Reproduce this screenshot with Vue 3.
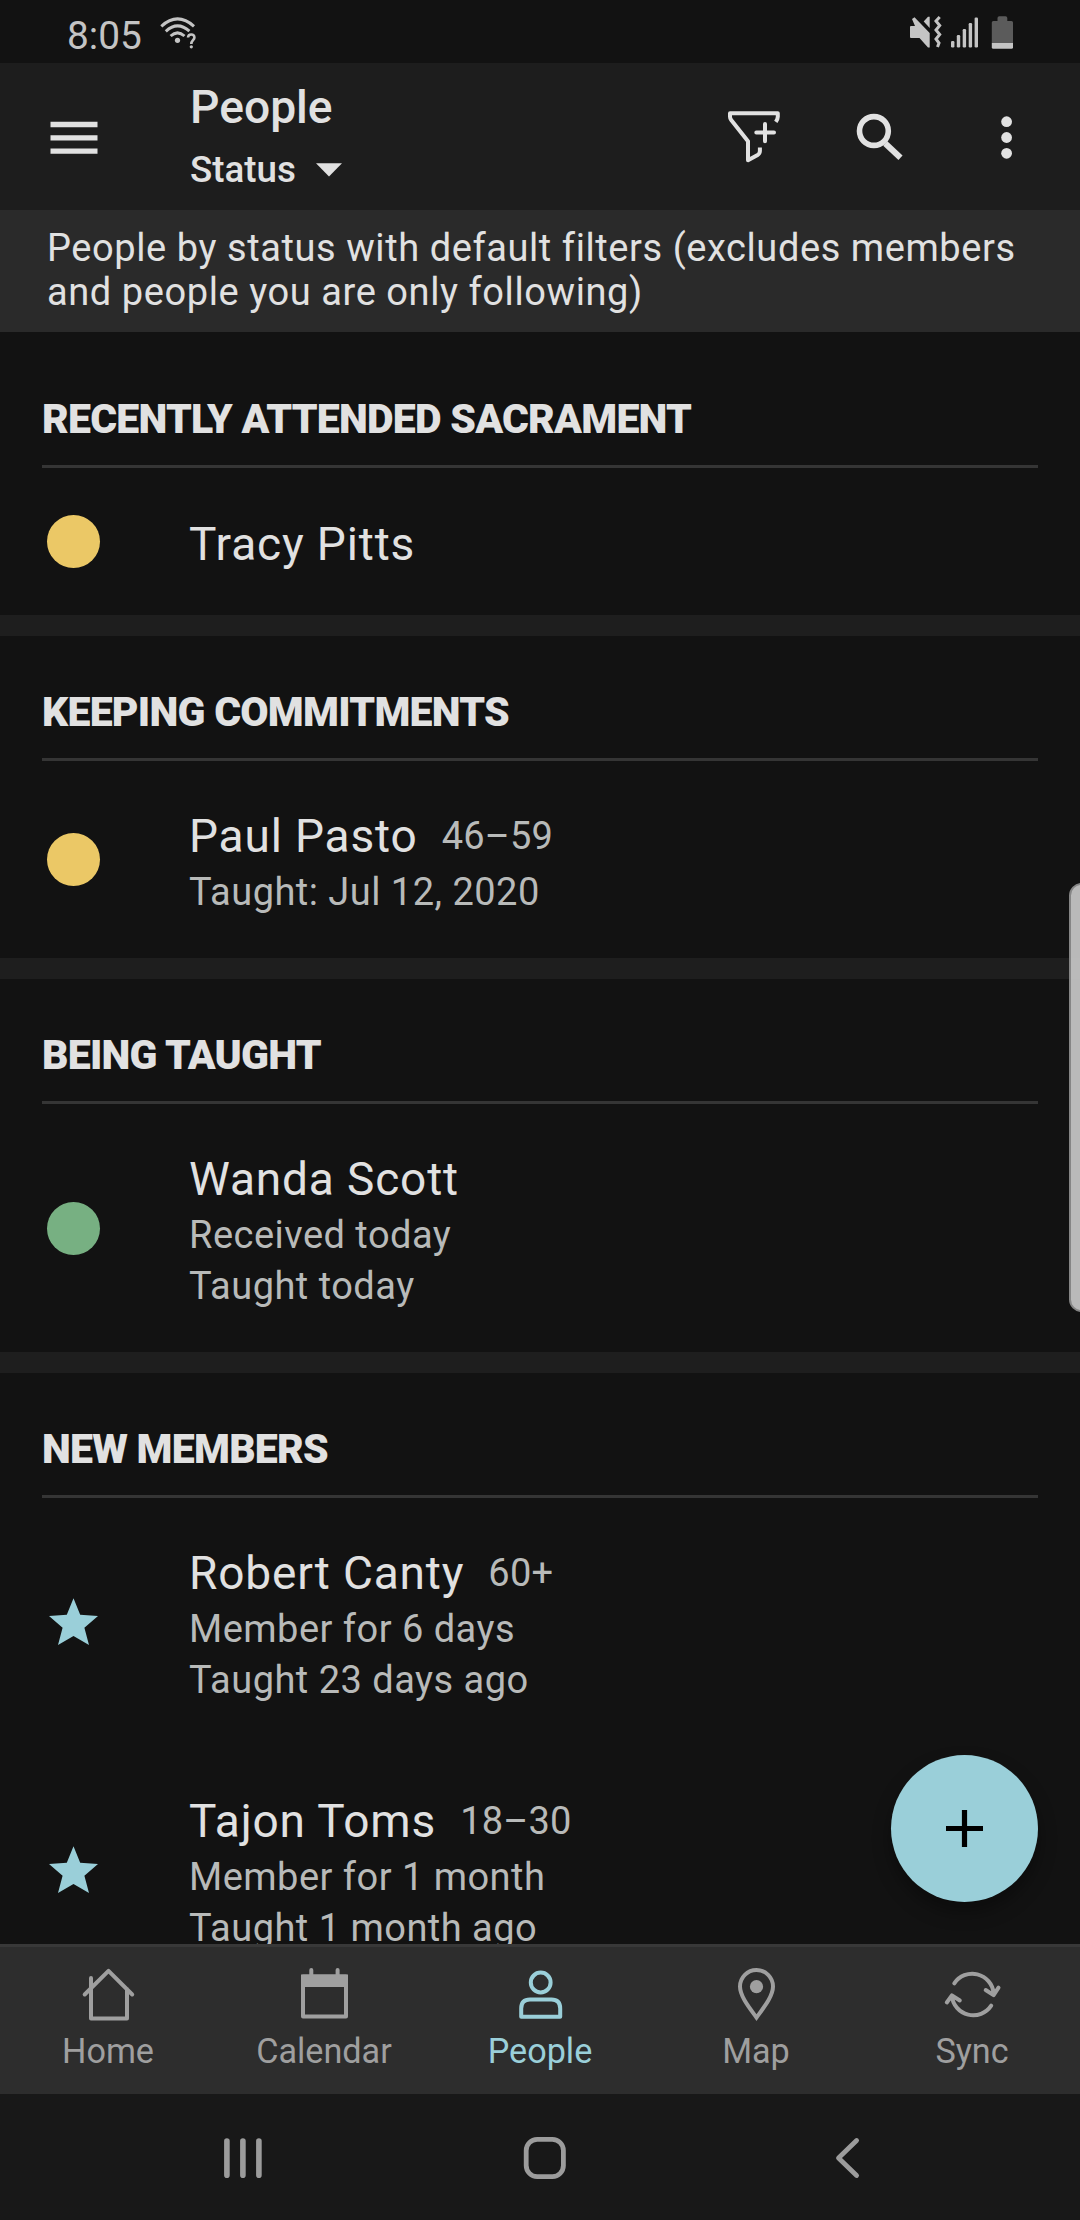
<script setup>
const sections = [
  { title: 'RECENTLY ATTENDED SACRAMENT', people: [{ name: 'Tracy Pitts', mark: 'yellow', lines: [] }] },
  {
    title: 'KEEPING COMMITMENTS',
    people: [{ name: 'Paul Pasto', age: '46–59', mark: 'yellow', lines: ['Taught: Jul 12, 2020'] }],
  },
  {
    title: 'BEING TAUGHT',
    people: [{ name: 'Wanda Scott', mark: 'green', lines: ['Received today', 'Taught today'] }],
  },
  {
    title: 'NEW MEMBERS',
    people: [
      { name: 'Robert Canty', age: '60+', mark: 'star', lines: ['Member for 6 days', 'Taught 23 days ago'] },
      { name: 'Tajon Toms', age: '18–30', mark: 'star', lines: ['Member for 1 month', 'Taught 1 month ago'] },
    ],
  },
]
const tabs = ['Home', 'Calendar', 'People', 'Map', 'Sync']
</script>

<template>
  <div class="screen">
    <header class="status">
      <span class="time">8:05</span>
      <svg class="wifi" width="40" height="36" viewBox="158 14 40 36" fill="none" stroke="#c4c4c4" stroke-width="3">
        <path d="M161.3 26.3Q177.500 11.500 194 26.300M165.800 31.300Q177.500 20.500 189.400 31.200M170.600 36Q177.500 29.800 184.500 36" />
        <circle cx="177.500" cy="40.300" r="2.600" fill="#c4c4c4" stroke="none" />
        <path d="M188 37.500C188.300 33.300 194.600 33.500 194.400 37.600C194.200 40.200 191.300 40.300 191.300 44" stroke-width="2.600" />
        <circle cx="191.300" cy="46.800" r="1.600" fill="#c4c4c4" stroke="none" />
      </svg>
      <svg class="indicators" width="110" height="40" viewBox="906 13 110 40" fill="#c4c4c4">
        <path d="M911 26H915L912 19L914.500 17.300L929.700 33V47.500H928L919.500 38H911Q910 38 910 37V27Q910 26 911 26Z" />
        <path d="M923.700 21.500L928 16.800H929.700V28Z" />
        <path d="M939.700 17L936 21L939.700 25.500L936 30L939.700 34.500L936 39L939 43L937.500 47" fill="none" stroke="#c4c4c4" stroke-width="3" />
        <rect x="951" y="41" width="3.400" height="6.500" rx="1.200" />
        <rect x="956.800" y="35" width="3.400" height="12.500" rx="1.200" />
        <rect x="962.700" y="29" width="3.400" height="18.500" rx="1.200" />
        <rect x="968.700" y="23" width="3.400" height="24.500" rx="1.200" />
        <rect x="974.600" y="17.500" width="3.400" height="30" rx="1.200" />
        <path d="M997.500 21V18Q997.500 16.300 999.300 16.300H1005.500Q1007.300 16.300 1007.300 18V21H1011.500Q1013 21 1013 22.500V43H991.800V22.500Q991.800 21 993.300 21Z" fill="#5b5b5b" />
        <path d="M991.800 43H1013V47.300Q1013 48.800 1011.500 48.800H993.300Q991.800 48.800 991.800 47.300Z" />
      </svg>
    </header>

    <div class="appbar">
      <svg class="menu" width="48" height="34" viewBox="0 0 48 34" fill="#e1e1e1">
        <path d="M.500 .800H47.500V6.200H.500ZM.500 14.200H47.500V19.600H.500ZM.500 27.400H47.500V32.800H.500Z" />
      </svg>
      <div class="titles">
        <div class="title">People</div>
        <div class="subtitle">
          <span>Status</span>
          <svg width="26" height="14" viewBox="0 0 26 14"><path d="M0 .300H26L13 13.500Z" fill="#e1e1e1" /></svg>
        </div>
      </div>
      <svg class="actions" width="300" height="60" viewBox="720 107 300 60" fill="none" stroke="#e1e1e1" stroke-width="4" stroke-linejoin="round">
        <path d="M775.800 121.800Q777.800 119 777.800 116.800V113.200H730V116.800Q730 118.500 731.200 120L748 141.300V160.300L757.600 155Q759.800 153.700 759.900 151V147.500" />
        <path d="M765 124V141.200M756.300 132.500H774" stroke-linecap="round" />
        <circle cx="873.900" cy="131" r="14.400" stroke-width="5.600" />
        <path d="M885.300 143.500L900.500 157.800" stroke-width="6" />
        <g fill="#e1e1e1" stroke="none">
          <circle cx="1006.600" cy="121.700" r="5.400" />
          <circle cx="1006.600" cy="137.500" r="5.400" />
          <circle cx="1006.600" cy="153.300" r="5.400" />
        </g>
      </svg>
    </div>

    <div class="banner">People by status with default filters (excludes members<br />and people you are only following)</div>

    <main class="list">
      <section v-for="s in sections" :key="s.title" class="section">
        <h2 class="heading">{{ s.title }}</h2>
        <div v-for="p in s.people" :key="p.name" class="row" :class="{ single: !p.lines.length }">
          <div class="mark">
            <svg v-if="p.mark === 'star'" width="53" height="53" viewBox="0 0 53 53">
              <path d="M26.500 2.200L33.200 18.700L51 20L37.400 31.700L42 49.100L26.500 40.100L11 49.100L15.600 31.700L2 20L19.800 18.700Z" fill="#9acfd9" />
            </svg>
            <span v-else class="dot" :class="p.mark"></span>
          </div>
          <div class="info">
            <div class="name-line">
              <span class="name">{{ p.name }}</span>
              <span v-if="p.age" class="age">{{ p.age }}</span>
            </div>
            <div v-for="l in p.lines" :key="l" class="line">{{ l }}</div>
          </div>
        </div>
      </section>
      <div class="thumb"></div>
      <button class="fab" aria-label="Add">
        <svg width="37" height="37" viewBox="0 0 37 37"><path d="M15.900 0H21.100V15.900H37V21.100H21.100V37H15.900V21.100H0V15.900H15.900Z" /></svg>
      </button>
    </main>

    <nav class="tabs">
      <div v-for="t in tabs" :key="t" class="tab" :class="{ active: t === 'People' }">
        <svg v-if="t === 'Home'" width="60" height="56" viewBox="78 1966 60 56">
          <path d="M84.700 1994.500L108.500 1970.800L132.200 1994.500M91 1989V1978M91 1989V2018.600H127V1989" />
        </svg>
        <svg v-else-if="t === 'Calendar'" width="60" height="56" viewBox="294 1966 60 56">
          <path d="M303 1976.500H346V2016.500H303ZM311.300 1970V1976M337.600 1970V1976" />
          <path d="M301 1974.500H348V1987H301Z" fill="currentColor" stroke="none" />
        </svg>
        <svg v-else-if="t === 'People'" width="60" height="56" viewBox="510 1966 60 56">
          <circle cx="540.700" cy="1982.500" r="9.900" />
          <path d="M521.200 2016.700V2008.500Q521.200 1999.600 530 1999.600H551.400Q560.200 1999.600 560.200 2008.500V2016.700Z" />
        </svg>
        <svg v-else-if="t === 'Map'" width="60" height="56" viewBox="726 1966 60 56">
          <path d="M756.500 2017.500C750 2008.500 740 1996.500 740 1986.500A16.500 16.500 0 0 1 773 1986.500C773 1996.500 763 2008.500 756.500 2017.500Z" stroke-linejoin="miter" />
          <circle cx="756.500" cy="1986.700" r="6.600" fill="currentColor" stroke="none" />
        </svg>
        <svg v-else width="60" height="56" viewBox="942 1966 60 56">
          <path d="M954.300 1983.300A21.500 21.500 0 0 1 993.600 1993M985.700 1990L993.600 1995.200L998.500 1987.700" />
          <path d="M991.200 2005.700A21.500 21.500 0 0 1 951.900 1996M959.800 2000.500L951.900 1995.400L946.800 2002.500" />
        </svg>
        <span class="label">{{ t }}</span>
      </div>
    </nav>

    <footer class="system">
      <svg width="1080" height="126" viewBox="0 2094 1080 126" fill="none" stroke="#9c9c9c" stroke-linecap="round" stroke-linejoin="round">
        <path d="M226.900 2141V2175.200M242.900 2141V2175.200M258.900 2141V2175.200" stroke-width="5.600" />
        <rect x="526.200" y="2139.400" width="37.200" height="37.200" rx="11" stroke-width="4.800" />
        <path d="M856.600 2140.500L838.500 2158L856.600 2175.500" stroke-width="4.800" />
      </svg>
    </footer>
  </div>
</template>

<style>
body {
  background: #121212;
}
</style>

<style scoped>
.screen {
  width: 1080px;
  height: 2220px;
  display: flex;
  flex-direction: column;
  overflow: hidden;
  background: #121212;
  color: #e1e1e1;
  font-family: Roboto, sans-serif;
}
.status {
  flex: none;
  height: 63px;
  display: flex;
  box-sizing: border-box;
  padding: 13px 64px 0 67px;
}
.time {
  width: 91px;
  font-size: 38.800px;
  line-height: 45px;
  color: #c4c4c4;
}
.wifi {
  margin-top: 1px;
}
.indicators {
  margin-left: auto;
}
.appbar {
  flex: none;
  height: 147px;
  display: flex;
  box-sizing: border-box;
  padding: 0 60px 0 50px;
  background: #1d1d1d;
}
.menu {
  margin-top: 58px;
}
.titles {
  margin-left: 92px;
  padding-top: 16px;
  font-weight: 500;
}
.title {
  font-size: 46.200px;
  line-height: 56px;
}
.subtitle {
  display: flex;
  align-items: center;
  gap: 20px;
  margin-top: 9px;
  font-size: 36.750px;
  line-height: 51px;
}
.actions {
  margin: 44px 0 0 auto;
}
.banner {
  flex: none;
  height: 122px;
  box-sizing: border-box;
  padding: 16px 0 0 47px;
  background: #2a2a2a;
  font-size: 38px;
  line-height: 44px;
  letter-spacing: 0.580px;
  white-space: nowrap;
}
.list {
  position: relative;
  flex: 1;
  min-height: 0;
  padding-top: 11px;
  overflow: hidden;
}
.section + .section {
  border-top: 21px solid #1e1e1e;
}
.heading {
  height: 122px;
  margin: 0 42px;
  box-sizing: content-box;
  border-bottom: 3px solid #353535;
  font-size: 41px;
  line-height: 153px;
  font-weight: 900;
  letter-spacing: -0.750px;
}
.row {
  display: flex;
  min-height: 147px;
  box-sizing: border-box;
  padding-left: 47px;
}
.mark {
  width: 142px;
  display: flex;
  align-items: center;
}
.dot {
  width: 53px;
  height: 53px;
  border-radius: 50%;
}
.yellow {
  background: #ebc866;
}
.green {
  background: #77b082;
}
.info {
  padding: 47px 0 40px;
}
.single .info {
  padding: 48px 0 39px;
}
.name-line {
  display: flex;
  height: 59px;
  line-height: 56px;
}
.name {
  font-size: 46px;
  letter-spacing: 0.850px;
}
.age {
  margin-left: 24px;
  line-height: 57px;
  font-size: 38px;
  letter-spacing: 0.200px;
  color: #b8bab9;
}
.line {
  font-size: 38px;
  line-height: 51px;
  letter-spacing: 0.480px;
  color: #b8bab9;
}
.thumb {
  position: absolute;
  top: 551px;
  right: -14px;
  width: 25px;
  height: 429px;
  box-sizing: border-box;
  border: 2px solid #858585;
  border-radius: 14px;
  background: rgba(200, 200, 200, 0.920);
}
.fab {
  position: absolute;
  right: 42px;
  bottom: 42px;
  width: 147px;
  height: 147px;
  display: flex;
  align-items: center;
  justify-content: center;
  padding: 0;
  border: 0;
  border-radius: 50%;
  background: #9acfd9;
  box-shadow: 0 10px 18px rgba(0, 0, 0, 0.350);
}
.tabs {
  flex: none;
  height: 150px;
  display: flex;
  box-sizing: border-box;
  border-top: 3px solid #383838;
  background: #2d2d2d;
}
.tab {
  flex: 1;
  display: flex;
  flex-direction: column;
  align-items: center;
  padding-top: 19px;
  color: #9f9f9f;
}
.tab svg {
  fill: none;
  stroke: currentColor;
  stroke-width: 4;
  stroke-linecap: round;
  stroke-linejoin: round;
}
.label {
  margin-top: 7px;
  font-size: 34.200px;
  line-height: 44px;
}
.active {
  color: #9acfd9;
}
.system {
  flex: none;
  height: 126px;
  background: #181818;
}
</style>
